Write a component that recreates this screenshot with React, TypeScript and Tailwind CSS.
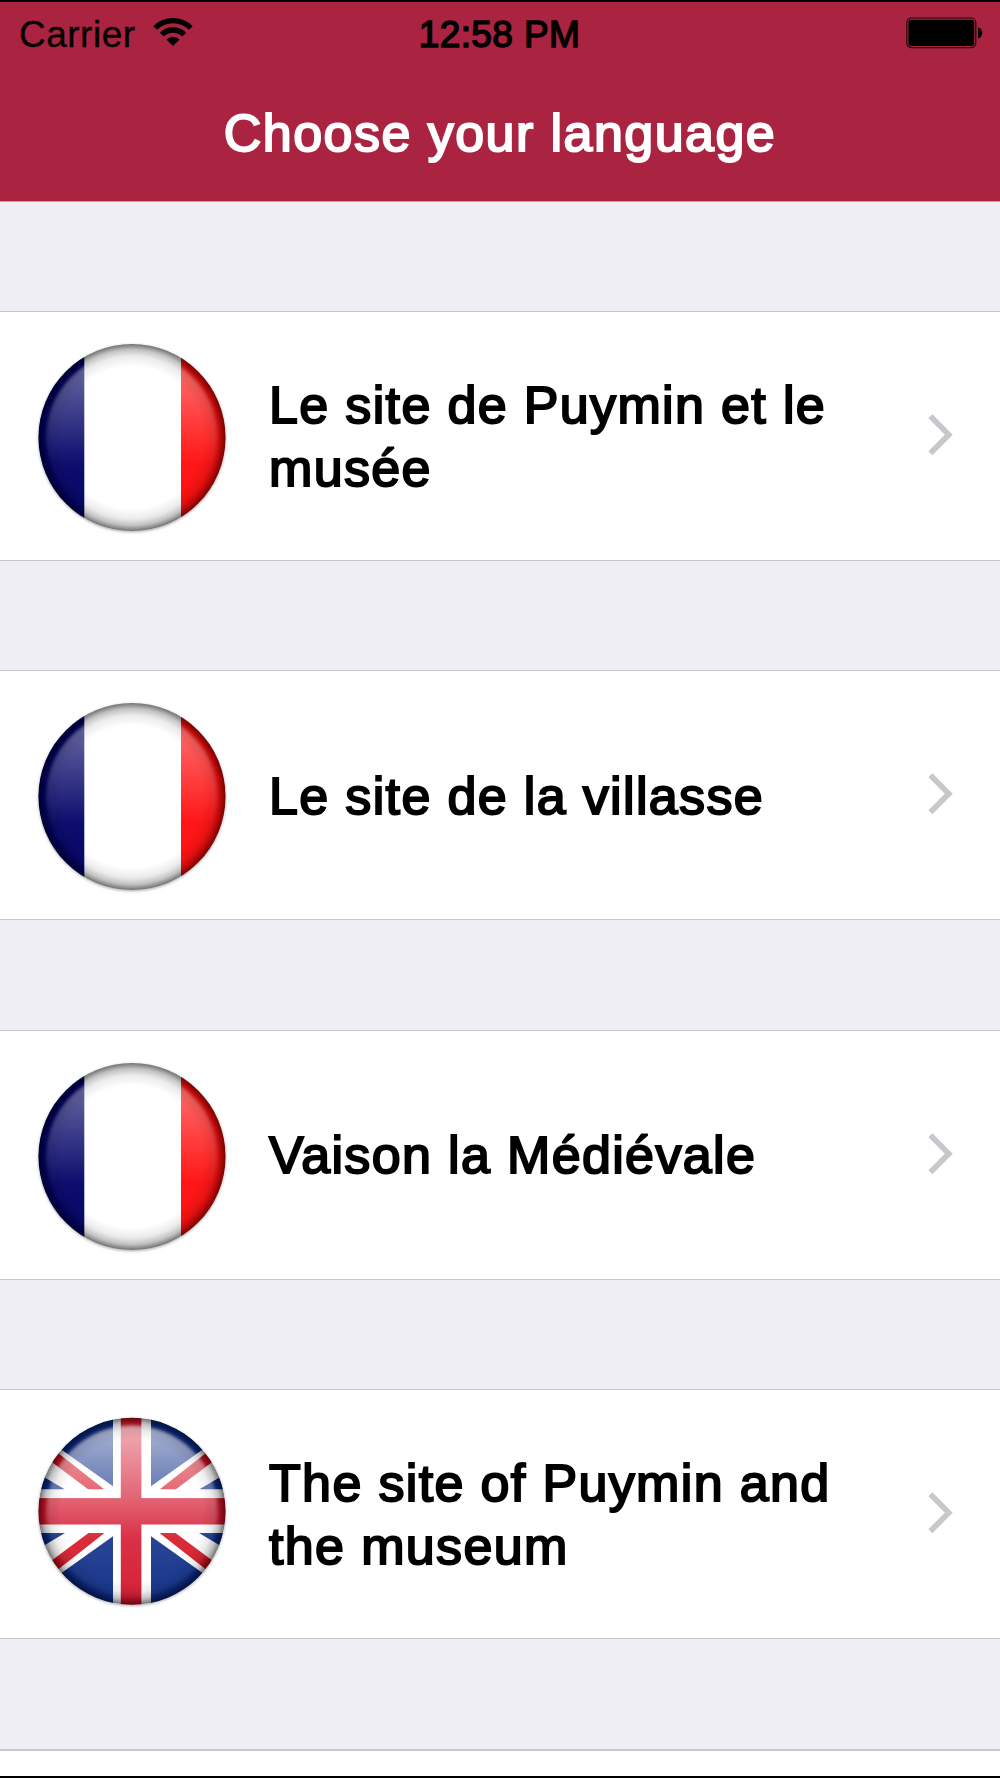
import { useId } from "react"

type Country = "fr" | "uk"

const sites: { title: string; country: Country }[] = [
  { title: "Le site de Puymin et le musée", country: "fr" },
  { title: "Le site de la villasse", country: "fr" },
  { title: "Vaison la Médiévale", country: "fr" },
  { title: "The site of Puymin and the museum", country: "uk" },
]

function WifiIcon() {
  return (
    <svg width="40" height="30" viewBox="-20 -29 40 30" fill="none" stroke="#000">
      <path d="M-17.8 -18 A25.3 25.3 0 0 1 17.8 -18" strokeWidth="5.2" />
      <path d="M-11.3 -11.4 A16 16 0 0 1 11.3 -11.4" strokeWidth="5.4" />
      <path d="M0 0 L-6.6 -6.6 A9.3 9.3 0 0 1 6.6 -6.6 Z" fill="#000" stroke="none" />
    </svg>
  )
}

function BatteryIcon() {
  return (
    <svg width="78" height="32" viewBox="0 0 78 32">
      <rect x="0.8" y="1" width="69" height="29.6" rx="4.5" fill="none" stroke="#000" strokeOpacity="0.8" strokeWidth="1.2" />
      <rect x="2.4" y="2.7" width="65.8" height="26.2" rx="3" fill="#000" />
      <path d="M72 10.5 C77.6 11.5 77.6 20.5 72 21.5 Z" fill="#000" />
    </svg>
  )
}

function FrenchStripes() {
  return (
    <>
      <rect x="-100" y="-100" width="200" height="200" fill="#fff" />
      <rect x="-100" y="-100" width="52.3" height="200" fill="#000066" />
      <rect x="49" y="-100" width="60" height="200" fill="#ff0a0a" />
    </>
  )
}

const quadrants = ["scale(1 1)", "scale(-1 1)", "scale(1 -1)", "scale(-1 -1)"]

function UnionJack() {
  return (
    <>
      <rect x="-100" y="-100" width="200" height="200" fill="#fff" />
      {quadrants.map((transform) => (
        <g key={transform} transform={transform}>
          <path d="M-95 -79 L-19 -25 V-100 H-95 Z" fill="#0a2a86" />
          <path d="M-96 -39 L-67 -21.8 H-96 Z" fill="#0a2a86" />
          <path d="M-90 -56.5 L-80 -63 L-27.5 -21.7 H-43.5 Z" fill="#d4101f" />
        </g>
      ))}
      <rect x="-18.7" y="-100" width="35.6" height="200" fill="#fff" />
      <rect x="-100" y="-21.8" width="200" height="43.2" fill="#fff" />
      <rect x="-11.2" y="-100" width="20.6" height="200" fill="#d4142c" />
      <rect x="-100" y="-13.2" width="200" height="26.4" fill="#d4142c" />
    </>
  )
}

function Flag({ country }: { country: Country }) {
  const id = useId()
  const uk = country === "uk"

  return (
    <svg className="shrink-0" width="200" height="220" viewBox={uk ? "-100 -107.3 200 220" : "-100 -111.5 200 220"}>
      <defs>
        <clipPath id={`${id}clip`}>
          <circle r="93.5" />
        </clipPath>
        <radialGradient id={`${id}rim`} gradientUnits="userSpaceOnUse" cx="0" cy="0" r="93.5">
          <stop offset="0.76" stopColor="#000" stopOpacity="0" />
          <stop offset="0.87" stopColor="#000" stopOpacity="0.08" />
          <stop offset="0.94" stopColor="#000" stopOpacity="0.24" />
          <stop offset="1" stopColor="#000" stopOpacity="0.55" />
        </radialGradient>
        <linearGradient id={`${id}gloss`} x1="0" y1="0" x2="0" y2="1">
          <stop offset="0" stopColor="#fff" stopOpacity={uk ? 0.66 : 0.46} />
          <stop offset="0.45" stopColor="#fff" stopOpacity={uk ? 0.32 : 0.18} />
          <stop offset="0.66" stopColor="#fff" stopOpacity={uk ? 0.12 : 0.05} />
          <stop offset="1" stopColor="#fff" stopOpacity={uk ? 0.06 : 0.02} />
        </linearGradient>
        <filter id={`${id}soft`} x="-10%" y="-10%" width="120%" height="120%">
          <feGaussianBlur stdDeviation="1.4" />
        </filter>
      </defs>
      <circle cy="1" r="93.5" fill="#000" opacity="0.35" filter={`url(#${id}soft)`} />
      <g clipPath={`url(#${id}clip)`}>
        {uk ? <UnionJack /> : <FrenchStripes />}
        <circle r="86" fill={`url(#${id}gloss)`} filter={`url(#${id}soft)`} />
        <circle r="94" fill={`url(#${id}rim)`} />
      </g>
    </svg>
  )
}

function Chevron() {
  return (
    <svg className="-mt-0.5 shrink-0" width="26" height="42" viewBox="0 0 26 42" fill="none" stroke="#c7c7cc" strokeWidth="5.6">
      <path d="M2.4 2.2 L20.8 20.7 L2.4 39.2" />
    </svg>
  )
}

export default function App() {
  return (
    <main className="flex h-[1778px] w-[1000px] flex-col overflow-hidden border-y-2 border-black bg-[#efeef4] font-['Liberation_Sans',Arial,sans-serif] text-black">
      <header className="h-[200px] shrink-0 border-b border-[#b9a3b0] bg-[#aa2340]">
        <div className="grid h-[66px] grid-cols-3 items-center pr-[16px] pl-[19px] text-[37px] leading-[66px]">
          <div className="flex items-center gap-[17px]">
            <span className="tracking-[0.5px] [-webkit-text-stroke:0.3px_#000]">Carrier</span>
            <span className="-mt-1.5">
              <WifiIcon />
            </span>
          </div>
          <span className="-ml-[4px] text-center tracking-[0.4px] [-webkit-text-stroke:1.5px_#000]">12:58 PM</span>
          <span className="-mt-1 justify-self-end">
            <BatteryIcon />
          </span>
        </div>
        <h1 className="pt-[34px] text-center text-[52px] leading-[63px] tracking-[1.45px] text-white [-webkit-text-stroke:2px_#fff]">
          Choose your language
        </h1>
      </header>

      <ul className="flex flex-col gap-[109.6px] pt-[109px]">
        {sites.map((site) => (
          <li key={site.title} className="flex h-[249.8px] shrink-0 items-center border-y border-[#c8c7cc] bg-white pr-[46px] pl-8">
            <Flag country={site.country} />
            <p className="ml-[37px] w-[590px] pt-0.5 text-[52px] leading-[63px] tracking-[1.35px] [-webkit-text-stroke:2px_#000]">
              {site.title}
            </p>
            <div className="ml-auto">
              <Chevron />
            </div>
          </li>
        ))}
        <li className="h-[249.8px] shrink-0 border-t-2 border-[#c8c7cc] bg-white" />
      </ul>
    </main>
  )
}
